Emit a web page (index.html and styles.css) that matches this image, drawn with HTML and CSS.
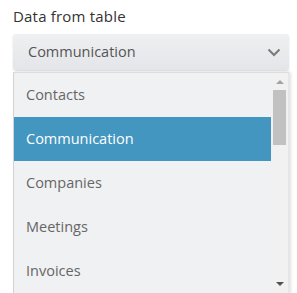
FILE: index.html
```html
<!DOCTYPE html>
<html lang="en">
<head>
    <meta charset="UTF-8">
    <title>Data from table</title>
    <link rel="stylesheet" href="styles.css">
</head>
<body>
    <div class="field">
        <div class="label">Data from table</div>
        <div class="select">
            <span class="value">Communication</span>
            <svg class="chevron" width="14" height="9" viewBox="0 0 14 9">
                <path d="M1.5 1.5 L7 7 L12.5 1.5" fill="none" stroke="#7a7a7a" stroke-width="2"/>
            </svg>
        </div>
        <div class="list">
            <ul class="options">
                <li>Contacts</li>
                <li class="active">Communication</li>
                <li>Companies</li>
                <li>Meetings</li>
                <li>Invoices</li>
            </ul>
            <div class="scrollbar">
                <div class="arrow up"></div>
                <div class="thumb"></div>
                <div class="track"></div>
                <div class="arrow down"></div>
            </div>
        </div>
    </div>
</body>
</html>
```

FILE: styles.css
```css
html, body {
    margin: 0;
    padding: 0;
    background: #fff;
}
body {
    font-family: "Open Sans", "Liberation Sans", sans-serif;
    padding: 6px 8px 0 13px;
    height: 293px;
    box-sizing: border-box;
    overflow: hidden;
}
.label {
    font-size: 15px;
    line-height: 20px;
    letter-spacing: 0.2px;
    color: #333;
    margin-bottom: 8px;
}
.select {
    display: flex;
    align-items: center;
    justify-content: space-between;
    height: 36px;
    padding: 0 8px 0 15px;
    border-radius: 3px;
    background: linear-gradient(#eef0f2, #e3e5e8);
    box-shadow: 0 1px 2px rgba(0, 0, 0, 0.14);
    font-size: 14.5px;
    line-height: 36px;
    color: #555;
}
.chevron {
    display: block;
}
/* drop-down list */
.list {
    display: flex;
    margin-top: 2px;
    height: 221px;
    border-top: 1px solid #dcdcdc;
    border-left: 1px solid #d2d2d2;
    background: #f0f1f3;
    box-shadow: 2px 0 3px rgba(0, 0, 0, 0.12);
    overflow: hidden;
}
.options {
    flex: 1;
    margin: 0;
    padding: 0;
    list-style: none;
}
.options li {
    height: 44px;
    line-height: 44px;
    padding-left: 12px;
    font-size: 14.5px;
    color: #666;
}
.options .active {
    background-color: #4396c0;
    color: #fff;
}
.scrollbar {
    display: flex;
    flex-direction: column;
    align-items: center;
    width: 17px;
    background: #f1f1f1;
    border-right: 1px solid #e6e6e6;
}
.arrow {
    width: 0;
    height: 0;
    border-left: 4px solid transparent;
    border-right: 4px solid transparent;
}
.arrow.up {
    margin-top: 7px;
    border-bottom: 4px solid #a3a3a3;
}
.thumb {
    width: 13px;
    height: 55px;
    margin-top: 6px;
    background: #c1c1c1;
}
.track {
    flex: 1;
}
.arrow.down {
    margin-bottom: 8px;
    border-top: 4px solid #505050;
}
```
